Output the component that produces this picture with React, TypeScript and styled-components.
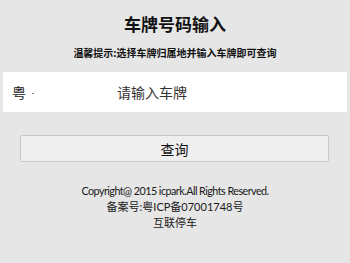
import React from 'react';
import styled, { createGlobalStyle } from 'styled-components';

const GlobalStyle = createGlobalStyle`
   html, body {
      margin: 0;
      padding: 0;
      background-color: #e6e6e6;
      font-family: "Noto Sans", "Noto Sans CJK SC", sans-serif;
   }
`;

const Page = styled.main`
   width: 350px;
   height: 263px;
   display: flex;
   flex-direction: column;
   align-items: stretch;
`;

const Title = styled.h1`
   margin: 0;
   padding-top: 14px;
   font-size: 17px;
   line-height: 20px;
   font-weight: 700;
   text-align: center;
   color: #111;
   font-family: "Noto Sans CJK SC", sans-serif;
`;

const Hint = styled.p`
   margin: 12px 0 0;
   font-size: 10px;
   line-height: 14px;
   font-weight: 700;
   text-align: center;
   color: #111;
   font-family: "Noto Sans CJK SC", sans-serif;
`;

const PlateBar = styled.div`
   margin: 12px 3px 0;
   height: 40px;
   background-color: #fff;
   display: flex;
   align-items: center;
`;

const Province = styled.div`
   width: 114px;
   padding-left: 9px;
   box-sizing: border-box;
   display: flex;
   align-items: center;
   gap: 6px;
   font-size: 14px;
   color: #222;
   font-family: "Noto Sans CJK SC", sans-serif;
`;

const Caret = styled.span`
   width: 2px;
   height: 1px;
   margin-top: 2px;
   background-color: #888;
`;

const PlateInput = styled.input`
   flex: 1;
   border: none;
   outline: none;
   background: transparent;
   font-size: 14px;
   padding: 0;
   font-family: "Noto Sans CJK SC", sans-serif;
   color: #222;

   &::placeholder {
      color: #333;
   }
`;

const QueryButton = styled.button`
   margin: 23px 21px 0 20px;
   height: 27px;
   background-color: #efefef;
   border: 1px solid #c8c8c8;
   border-radius: 2px;
   font-size: 14px;
   color: #111;
   font-family: "Noto Sans CJK SC", sans-serif;
   padding: 0;
`;

const Footer = styled.footer`
   margin-top: 21px;
   display: flex;
   flex-direction: column;
   align-items: center;
   line-height: 16px;
   color: #1a1a1a;
   font-family: Lato, "Noto Sans CJK SC", sans-serif;
`;

const FooterLine = styled.span<{ $tight?: boolean }>`
   font-size: ${({ $tight }) => ($tight ? '10.8px' : '11px')};
   letter-spacing: ${({ $tight }) => ($tight ? '-0.55px' : '0')};
`;

const App: React.FC = () => {
   return (
      <Page>
         <GlobalStyle />
         <Title>车牌号码输入</Title>
         <Hint>温馨提示:选择车牌归属地并输入车牌即可查询</Hint>
         <PlateBar>
            <Province>
               <span>粤</span>
               <Caret />
            </Province>
            <PlateInput placeholder="请输入车牌" />
         </PlateBar>
         <QueryButton>查询</QueryButton>
         <Footer>
            <FooterLine $tight>Copyright@ 2015 icpark.All Rights Reserved.</FooterLine>
            <FooterLine>备案号:粤ICP备07001748号</FooterLine>
            <FooterLine>互联停车</FooterLine>
         </Footer>
      </Page>
   );
};

export default App;
